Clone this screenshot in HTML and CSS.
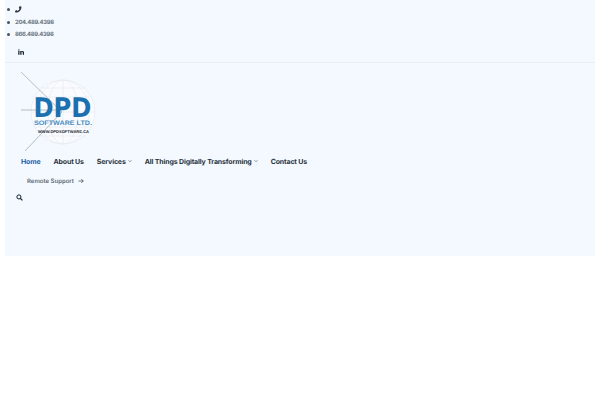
FILE: index.html
```html
<!DOCTYPE html>
<html lang="en">
<head>
<meta charset="utf-8">
<title>DPD Software Ltd.</title>
<link rel="stylesheet" href="styles.css">
</head>
<body>
<header class="header">
  <div class="topbar">
    <ul class="contacts">
      <li class="contact-row contact-first">
        <svg class="phone" viewBox="0 0 24 24" width="7" height="7"><path d="M21 2l-4.500-1c-.5-.1-1 .1-1.200.6l-2 4.800c-.2.4-.1.9.3 1.200l2.500 2.100c-1.500 3.200-4.100 5.800-7.300 7.300l-2.100-2.500c-.3-.4-.8-.5-1.200-.3l-4.800 2c-.5.2-.7.7-.6 1.200l1 4.500c.1.5.5.8 1 .8C13 23 23 13 22 3c0-.5-.5-.9-1-1z"/></svg>
      </li>
      <li class="contact-row">204.489.4398</li>
      <li class="contact-row">866.489.4398</li>
    </ul>
    <div class="social">
      <svg viewBox="0 0 24 24" width="6" height="6"><path d="M1 8h5v15H1zM3.500 1a2.700 2.700 0 1 1 0 5.400 2.700 2.700 0 0 1 0-5.400zM9 8h4.700v2.100c.8-1.400 2.500-2.500 4.800-2.500 4.300 0 5.500 2.800 5.500 6.900V23h-5v-7.600c0-2-.4-3.600-2.500-3.600-2.200 0-2.500 1.700-2.500 3.500V23H9z"/></svg>
    </div>
  </div>
  <div class="main">
    <svg class="logo" viewBox="0 0 74 80" width="74" height="80">
      <g fill="none" stroke="#e6ebf1" stroke-width=".7">
        <circle cx="42" cy="40" r="32" fill="#f9fbfe"/>
        <ellipse cx="42" cy="40" rx="15" ry="32"/>
        <ellipse cx="42" cy="40" rx="26" ry="32"/>
        <path d="M42 8v64M10 40h64M14 25h56M14 55h56M20 16h44M20 64h44"/>
      </g>
      <path d="M0 0L41 40 4 79M0 38H40" fill="none" stroke="#9aa3ae" stroke-width=".7"/>
      <text class="logo-dpd" x="12.500" y="45" textLength="58" lengthAdjust="spacingAndGlyphs">DPD</text>
      <text class="logo-sub" x="13" y="52.500" textLength="58" lengthAdjust="spacingAndGlyphs">SOFTWARE LTD.</text>
      <text class="logo-url" x="17" y="60.500" textLength="51" lengthAdjust="spacingAndGlyphs">WWW.DPDSOFTWARE.CA</text>
    </svg>
    <nav class="nav">
      <a class="nav-link nav-active">Home</a>
      <a class="nav-link">About Us</a>
      <a class="nav-link">Services <svg class="chev" viewBox="0 0 8 8" width="4" height="4"><path d="M1 2.500l3 3 3-3" fill="none" stroke="#2a3340" stroke-width="1"/></svg></a>
      <a class="nav-link">All Things Digitally Transforming <svg class="chev" viewBox="0 0 8 8" width="4" height="4"><path d="M1 2.500l3 3 3-3" fill="none" stroke="#2a3340" stroke-width="1"/></svg></a>
      <a class="nav-link">Contact Us</a>
    </nav>
    <a class="support">Remote Support
      <svg viewBox="0 0 12 12" width="6" height="6"><path d="M1 6h9.500M6.500 2l4 4-4 4" fill="none" stroke="#2a3340" stroke-width="1.300"/></svg>
    </a>
    <svg class="search" viewBox="0 0 12 12" width="7" height="7"><circle cx="5" cy="5" r="3.500" fill="none" stroke="#0d1a26" stroke-width="1.700"/><path d="M7.500 7.500L11 11" stroke="#0d1a26" stroke-width="2"/></svg>
  </div>
</header>
</body>
</html>
```
FILE: styles.css
```css
* { box-sizing: border-box; }
html, body { margin: 0; background: #fff; }
body { font-family: Inter, "Liberation Sans", sans-serif; text-rendering: geometricPrecision; }
.header {
  margin: 0 5px;
  height: 256px;
  background: #f3f9fe;
}
.topbar {
  height: 63px;
  padding-top: 3px;
  border-bottom: 1px solid #e9eef3;
}
.contacts {
  margin: 0;
  padding: 0 0 0 2px;
  list-style: none;
  color: #6a747f;
  font-size: 5.900px;
  font-weight: 700;
  letter-spacing: -.3px;
}
.contact-row {
  display: flex;
  align-items: center;
  gap: 5px;
  height: 12px;
  line-height: 13px;
}
.contact-first { height: 13px; }
.contact-row::before {
  content: "";
  width: 3px;
  height: 3px;
  border-radius: 50%;
  background: #46535f;
}
.phone { display: block; fill: #2a3540; }
.social {
  margin-top: 9px;
  padding-left: 13px;
  line-height: 0;
  fill: #16212c;
}
.main { display: flex; flex-direction: column; align-items: flex-start; padding-top: 9px; }
.logo { display: block; margin-left: 16px; overflow: visible; }
.logo-dpd { font: 700 27px "DejaVu Sans", sans-serif; fill: #1d70b0; }
.logo-sub { font: 700 6.500px "Liberation Sans", sans-serif; fill: #4a8cc0; }
.logo-url { font: 700 4px "Liberation Sans", sans-serif; fill: #1f2733; }
.nav {
  display: flex;
  gap: 13px;
  margin: 3px 0 0 16px;
  height: 12px;
  align-items: center;
  color: #2a3340;
  font-size: 7px;
  font-weight: 700;
  letter-spacing: -.15px;
  white-space: nowrap;
}
.nav-link { display: flex; align-items: center; gap: 2px; }
.nav-active { color: #1d5fa5; }
.chev { display: block; }
.support {
  display: flex;
  align-items: center;
  gap: 4px;
  margin: 8px 0 0 22px;
  height: 12px;
  color: #5f6a76;
  font-size: 6px;
  font-weight: 600;
  white-space: nowrap;
}
.search { display: block; margin: 7px 0 0 11px; }
```
